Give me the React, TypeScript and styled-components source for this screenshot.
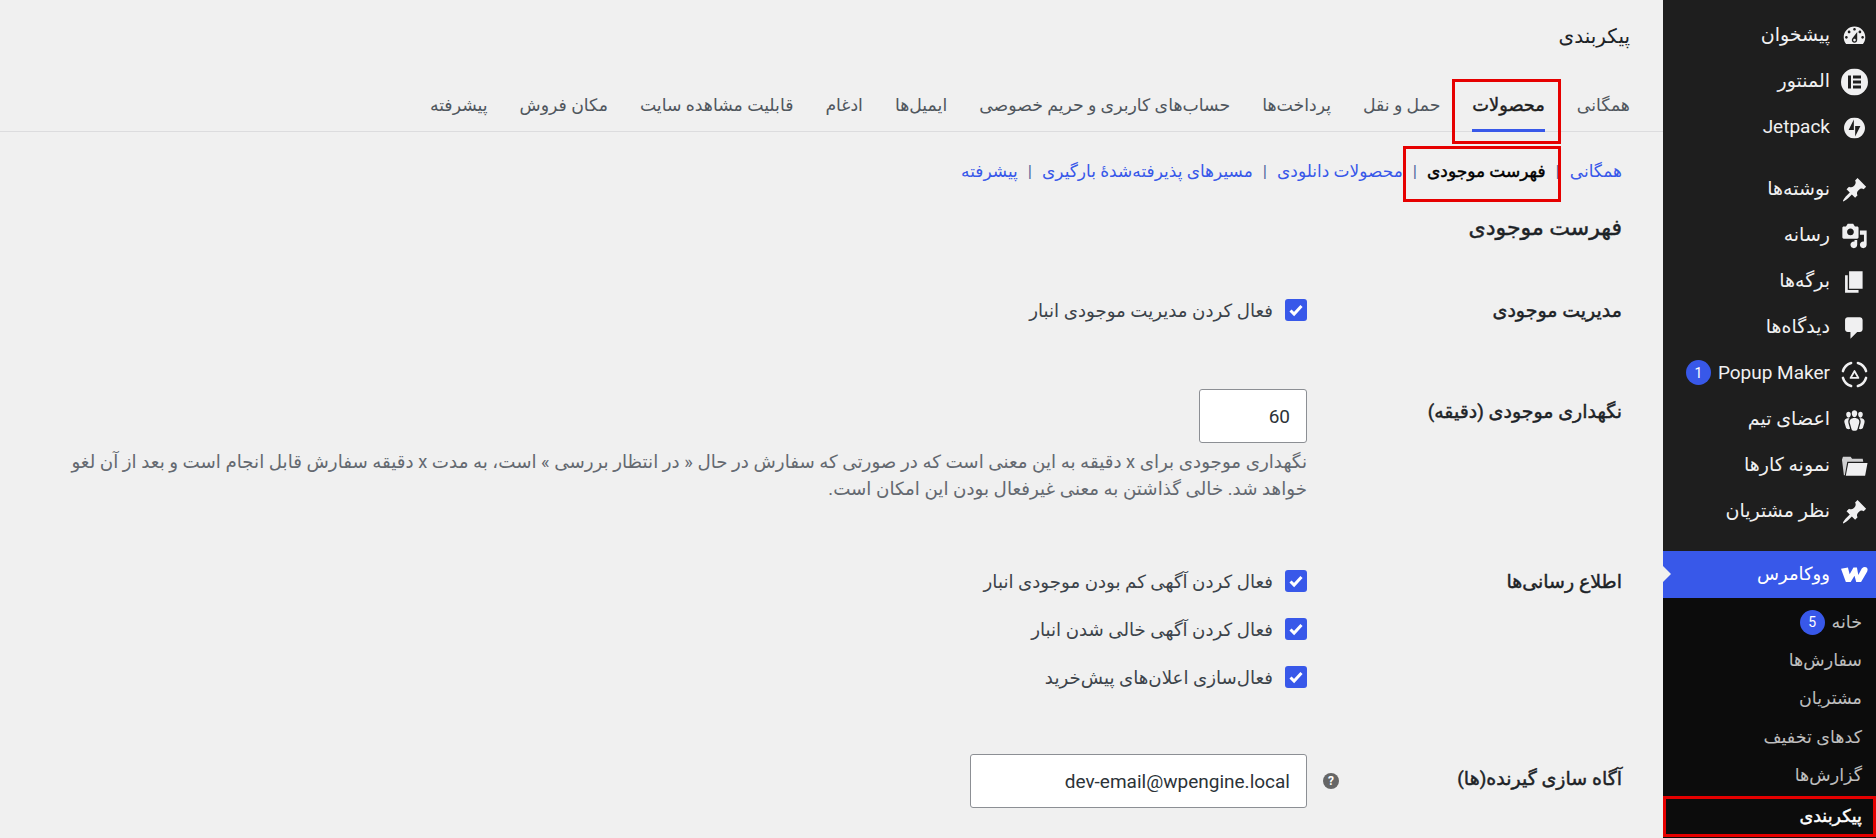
import React from "react";
import styled, { createGlobalStyle, css } from "styled-components";

const FONT = `Roboto, "Noto Sans", "DejaVu Sans", sans-serif`;

// the fallback Arabic face gets far too wide in bold, so fake the medium weight
const medium = css`
  font-weight: 400;
  -webkit-text-stroke: 0.45px currentColor;
`;

const Global = createGlobalStyle`
  html, body {
    margin: 0;
    padding: 0;
    height: 100%;
    overflow: hidden;
    background: #f0f0f0;
  }
  * { box-sizing: border-box; }
`;

const Page = styled.div`
  display: flex;
  direction: rtl;
  width: 1876px;
  height: 838px;
  overflow: hidden;
  font-family: ${FONT};
  background: #f0f0f0;
`;

const Sidebar = styled.aside`
  flex: 0 0 213px;
  height: 838px;
  background: #1e1e1e;
  padding-top: 13px;
  color: #f0f0f1;
`;

const MenuItem = styled.div<{ $gap?: boolean; $active?: boolean }>`
  position: relative;
  display: flex;
  align-items: center;
  height: ${(p) => (p.$active ? 47 : 46)}px;
  margin-top: ${(p) => (p.$gap ? 16 : 0)}px;
  padding-right: 46px;
  padding-bottom: 3px;
  font-size: ${(p) => (p.$active ? 18 : 19)}px;
  background: ${(p) => (p.$active ? "#3858e9" : "transparent")};
  color: ${(p) => (p.$active ? "#fff" : "#f0f0f1")};
`;

const MenuIcon = styled.span`
  position: absolute;
  right: 8px;
  top: 50%;
  transform: translateY(-50%);
  display: flex;
  width: 27px;
  height: 27px;
  align-items: center;
  justify-content: center;
  svg {
    display: block;
    fill: #f0f0f1;
  }
`;

const Badge = styled.span`
  display: inline-flex;
  align-items: center;
  justify-content: center;
  width: 25px;
  height: 25px;
  margin-right: 7px;
  border-radius: 50%;
  background: #3858e9;
  color: #fff;
  font-size: 14px;
  font-family: Roboto, sans-serif;
`;

const ActiveNotch = styled.span`
  position: absolute;
  left: 0;
  top: 15px;
  width: 0;
  height: 0;
  border-top: 8px solid transparent;
  border-bottom: 8px solid transparent;
  border-left: 8px solid #f0f0f0;
`;

const SubMenu = styled.div`
  background: #0c0c0c;
  padding-top: 5px;
  height: 241px;
`;

const SubItem = styled.div`
  display: flex;
  align-items: center;
  height: 38.2px;
  padding-right: 14px;
  font-size: 17.5px;
  color: rgba(240, 240, 241, 0.78);
`;

const CurrentBox = styled.div`
  margin-top: 2px;
  border: 3px solid #e60000;
  height: 41px;
  padding-right: 11px;
  display: flex;
  align-items: center;
  color: #fff;
  ${medium};
  font-size: 17.5px;
`;

const Main = styled.main`
  flex: 1;
  min-width: 0;
`;

const PageTitle = styled.h1`
  margin: 0;
  height: 70px;
  padding: 21px 33px 0 0;
  font-size: 20px;
  line-height: 30px;
  font-weight: 400;
  color: #1d2327;
`;

const TabBar = styled.nav`
  display: flex;
  height: 62px;
  padding-right: 17px;
  border-bottom: 1px solid #dcdcde;
`;

const Tab = styled.a<{ $active?: boolean }>`
  position: relative;
  display: flex;
  align-items: center;
  height: 61px;
  padding: 8px 16px 0;
  font-size: ${(p) => (p.$active ? 17.8 : 17.3)}px;
  white-space: nowrap;
  color: ${(p) => (p.$active ? "#1e1e1e" : "#50575e")};
  ${(p) => p.$active && medium};
  &::after {
    content: "";
    display: ${(p) => (p.$active ? "block" : "none")};
    position: absolute;
    left: 16px;
    right: 16px;
    bottom: -1px;
    height: 3px;
    background: #3858e9;
  }
`;

const RedMark = styled.span`
  position: absolute;
  border: 3px solid #e60000;
  pointer-events: none;
`;

const TabMark = styled(RedMark)`
  left: -4px;
  right: 0;
  top: 9px;
  height: 65px;
`;

const LinkMark = styled(RedMark)`
  left: -24px;
  right: -15px;
  top: -15px;
  height: 56px;
`;

const Content = styled.div`
  padding: 0 41px 0 0;
`;

const SubLinks = styled.div`
  display: flex;
  align-items: center;
  height: 26px;
  margin-top: 26px;
  font-size: 17px;
  white-space: nowrap;
`;

const SubLink = styled.a<{ $current?: boolean }>`
  position: relative;
  color: ${(p) => (p.$current ? "#000" : "#3858e9")};
  ${(p) => p.$current && medium};
`;

const Sep = styled.span`
  margin: 0 10px;
  color: #4f6aa0;
`;

const SectionTitle = styled.h2`
  margin: 29px 0 0;
  font-size: 22px;
  line-height: 30px;
  ${medium};
  color: #1d2327;
`;

const Row = styled.div<{ $top: number }>`
  display: flex;
  margin-top: ${(p) => p.$top}px;
`;

const RowLabel = styled.div<{ $height: number; $lift?: number }>`
  flex: 0 0 315px;
  display: flex;
  align-items: center;
  height: ${(p) => p.$height}px;
  padding-bottom: ${(p) => p.$lift ?? 0}px;
  font-size: 19px;
  ${medium};
  color: #1d2327;
`;

const Field = styled.div`
  flex: 1;
  min-width: 0;
  padding-left: 30px;
  color: #3c434a;
  font-size: 18.2px;
`;

const CheckRow = styled.label`
  display: flex;
  align-items: center;
  gap: 12px;
  height: 22px;
  & + & {
    margin-top: 26px;
  }
`;

const CheckBox = styled.span`
  flex: 0 0 22px;
  display: flex;
  align-items: center;
  justify-content: center;
  width: 22px;
  height: 22px;
  border-radius: 3px;
  background: #3858e9;
  svg {
    display: block;
  }
`;

const InputBox = styled.div<{ $width: number }>`
  display: flex;
  align-items: center;
  width: ${(p) => p.$width}px;
  height: 54px;
  padding: 0 16px;
  background: #fff;
  border: 1px solid #8c8f94;
  border-radius: 3px;
  font-size: 19px;
  color: #2c3338;
  font-family: Roboto, sans-serif;
  direction: ltr;
  justify-content: flex-end;
`;

const InputLine = styled.div`
  display: flex;
  align-items: center;
  gap: 16px;
  margin-right: -32px;
`;

const HelpDot = styled.span`
  display: flex;
  align-items: center;
  justify-content: center;
  width: 16px;
  height: 16px;
  border-radius: 50%;
  background: #666;
  color: #fff;
  font-size: 12px;
  font-weight: 700;
  font-family: Roboto, sans-serif;
`;

const Description = styled.p`
  margin: 5px 0 0;
  max-width: 1245px;
  font-size: 18.27px;
  line-height: 27px;
  color: #646970;
`;

const Pin = () => (
  <svg width="27" height="27" viewBox="0 0 20 20">
    <path d="M10.44 3.02l1.82-1.82 6.36 6.35-1.83 1.82c-1.05-.68-2.48-.57-3.41.36l-.75.75c-.92.93-1.04 2.35-.35 3.41l-1.83 1.82-2.41-2.41-2.8 2.79c-.42.42-3.38 2.71-3.8 2.29s1.86-3.39 2.28-3.81l2.79-2.79L4.1 9.36l1.83-1.82c1.05.69 2.48.57 3.4-.36l.75-.75c.93-.92 1.05-2.35.36-3.41z" />
  </svg>
);

const icons: Record<string, React.ReactNode> = {
  dashboard: (
    <svg width="27" height="27" viewBox="0 0 20 20">
      <path d="M3.76 16h12.48c1.1-1.37 1.76-3.11 1.76-5 0-4.42-3.58-8-8-8s-8 3.58-8 8c0 1.89.66 3.63 1.76 5zM10 4c.55 0 1 .45 1 1s-.45 1-1 1-1-.45-1-1 .45-1 1-1zM6 6c.55 0 1 .45 1 1s-.45 1-1 1-1-.45-1-1 .45-1 1-1zm8 0c.55 0 1 .45 1 1s-.45 1-1 1-1-.45-1-1 .45-1 1-1zm-5.37 5.55L12 7v6c0 1.1-.9 2-2 2s-2-.9-2-2c0-.57.24-1.08.63-1.45zM4 10c.55 0 1 .45 1 1s-.45 1-1 1-1-.45-1-1 .45-1 1-1zm12 0c.55 0 1 .45 1 1s-.45 1-1 1-1-.45-1-1 .45-1 1-1zm-5 3c0-.55-.45-1-1-1s-1 .45-1 1 .45 1 1 1 1-.45 1-1z" fillRule="evenodd" />
    </svg>
  ),
  elementor: (
    <svg width="27" height="27" viewBox="0 0 27 27">
      <path fillRule="evenodd" d="M13.5 0a13.5 13.5 0 100 27 13.5 13.5 0 000-27zM7 7h3v13H7zM12 7h8v3h-8zM12 12h8v3h-8zM12 17h8v3h-8z" />
    </svg>
  ),
  jetpack: (
    <svg width="21" height="21" viewBox="0 0 32 32">
      <path fillRule="evenodd" d="M16 0C7.2 0 0 7.2 0 16s7.2 16 16 16 16-7.2 16-16S24.8 0 16 0zM15 19H7l8-16v16zM17 29V13h8l-8 16z" />
    </svg>
  ),
  pin: <Pin />,
  media: (
    <svg width="27" height="27" viewBox="0 0 20 20">
      <path d="M13 11V4c0-.55-.45-1-1-1h-1.67L9 1H5L3.67 3H2c-.55 0-1 .45-1 1v7c0 .55.45 1 1 1h10c.55 0 1-.45 1-1zM7 4.5c1.38 0 2.5 1.12 2.5 2.5S8.38 9.5 7 9.5 4.5 8.38 4.5 7 5.62 4.5 7 4.5zM14 6h5v10.5c0 1.38-1.12 2.5-2.5 2.5S14 17.88 14 16.5s1.12-2.5 2.5-2.5c.17 0 .34.02.5.05V9h-3V6zm-4 8.05V13h2v3.5c0 1.38-1.12 2.5-2.5 2.5S7 17.88 7 16.5 8.12 14 9.5 14c.17 0 .34.02.5.05z" fillRule="evenodd" />
    </svg>
  ),
  page: (
    <svg width="27" height="27" viewBox="0 0 20 20">
      <path d="M6 15V2h10v13H6zm-1 1h8v2H3V5h2v11z" />
    </svg>
  ),
  comment: (
    <svg width="27" height="27" viewBox="0 0 20 20">
      <path d="M5 2h9c1.1 0 2 .9 2 2v7c0 1.1-.9 2-2 2h-2l-5 5v-5H5c-1.1 0-2-.9-2-2V4c0-1.1.9-2 2-2z" />
    </svg>
  ),
  popup: (
    <svg width="28" height="28" viewBox="0 0 28 28" style={{ fill: "none" }}>
      <g stroke="#f0f0f1" strokeWidth="2.6" strokeLinecap="round" fill="none">
        <path d="M2 10.5A12.5 12.5 0 0 1 10.5 2" />
        <path d="M17.5 2A12.5 12.5 0 0 1 26 10.5" />
        <path d="M26 17.5A12.5 12.5 0 0 1 17.5 26" />
        <path d="M10.5 26A12.5 12.5 0 0 1 2 17.5" />
        <path d="M14 10.5l4 7h-8z" strokeWidth="2" strokeLinejoin="round" />
      </g>
    </svg>
  ),
  team: (
    <svg width="27" height="27" viewBox="0 0 20 20">
      <path d="M8.03 4.46c-.29 1.28.55 3.46 1.97 3.46 1.41 0 2.25-2.18 1.96-3.46-.22-.98-1.08-1.63-1.96-1.63-.89 0-1.74.65-1.97 1.63zm-4.13.9c-.25 1.08.47 2.93 1.67 2.93s1.92-1.85 1.67-2.93c-.19-.83-.92-1.39-1.67-1.39s-1.48.56-1.67 1.39zm8.86 0c-.25 1.08.47 2.93 1.66 2.93 1.2 0 1.92-1.85 1.67-2.93-.19-.83-.92-1.39-1.67-1.39-.74 0-1.47.56-1.66 1.39zm-.59 11.43l1.25-4.3C14.2 10 12.71 8.47 10 8.47c-2.72 0-4.21 1.53-3.44 4.02l1.26 4.3C8.05 17.51 9 18 10 18c.98 0 1.94-.49 2.17-1.21zm-6.1-7.63c-.49.67-.96 1.83-.42 3.59l1.12 3.79c-.34.2-.77.31-1.2.31-.85 0-1.65-.41-1.85-1.03l-1.07-3.65c-.65-2.11.61-3.4 2.92-3.4.27 0 .54.02.79.06-.1.1-.2.22-.29.33zm8.35-.39c2.31 0 3.58 1.29 2.92 3.4l-1.07 3.65c-.2.62-1 1.03-1.85 1.03-.43 0-.86-.11-1.2-.31l1.11-3.77c.55-1.78.08-2.94-.42-3.61-.08-.11-.18-.23-.28-.33.25-.04.51-.06.79-.06z" />
    </svg>
  ),
  folder: (
    <svg width="28" height="21" viewBox="0 0 28 21">
      <path d="M1 4l1-3h8l1.5 2h11l.6 3H6.5L4 20H3z" opacity="0.85" />
      <path d="M7.5 7.5H27.5L25 20.5H5z" />
    </svg>
  ),
  woo: (
    <svg width="27" height="16" viewBox="0 0 78 45" style={{ fill: "#fff" }}>
      <path d="M0 6L20 2L25 22L36 2H46L50 24L60 5Q68-2 75 3Q80 10 72 20L58 44H44L39 26L28 44H14Z" />
    </svg>
  ),
};

const topMenu = [
  { icon: "dashboard", label: "پیشخوان" },
  { icon: "elementor", label: "المنتور" },
  { icon: "jetpack", label: "Jetpack" },
  { icon: "pin", label: "نوشته‌ها", gap: true },
  { icon: "media", label: "رسانه" },
  { icon: "page", label: "برگه‌ها" },
  { icon: "comment", label: "دیدگاه‌ها" },
  { icon: "popup", label: "Popup Maker", badge: "1" },
  { icon: "team", label: "اعضای تیم" },
  { icon: "folder", label: "نمونه کارها" },
  { icon: "pin", label: "نظر مشتریان" },
];

const tabs = [
  "همگانی",
  "محصولات",
  "حمل و نقل",
  "پرداخت‌ها",
  "حساب‌های کاربری و حریم خصوصی",
  "ایمیل‌ها",
  "ادغام",
  "قابلیت مشاهده سایت",
  "مکان فروش",
  "پیشرفته",
];

const Tick = () => (
  <svg width="16" height="16" viewBox="0 0 16 16">
    <path d="M2.5 8.5l3.6 3.6 7.4-8" fill="none" stroke="#fff" strokeWidth="3" />
  </svg>
);

const Check = ({ children }: { children: React.ReactNode }) => (
  <CheckRow>
    <CheckBox>
      <Tick />
    </CheckBox>
    {children}
  </CheckRow>
);

const App: React.FC = () => {
  return (
    <>
      <Global />
      <Page>
        <Sidebar>
          {topMenu.map((m) => (
            <MenuItem key={m.label} $gap={m.gap}>
              <MenuIcon>{icons[m.icon]}</MenuIcon>
              {m.label}
              {m.badge && <Badge>{m.badge}</Badge>}
            </MenuItem>
          ))}
          <MenuItem $gap $active>
            <MenuIcon>{icons.woo}</MenuIcon>
            ووکامرس
            <ActiveNotch />
          </MenuItem>
          <SubMenu>
            <SubItem>
              خانه
              <Badge>5</Badge>
            </SubItem>
            <SubItem>سفارش‌ها</SubItem>
            <SubItem>مشتریان</SubItem>
            <SubItem>کدهای تخفیف</SubItem>
            <SubItem>گزارش‌ها</SubItem>
            <CurrentBox>پیکربندی</CurrentBox>
          </SubMenu>
        </Sidebar>
        <Main>
          <PageTitle>پیکربندی</PageTitle>
          <TabBar>
            {tabs.map((t, i) => (
              <Tab key={t} $active={i === 1}>
                {t}
                {i === 1 && <TabMark />}
              </Tab>
            ))}
          </TabBar>
          <Content>
            <SubLinks>
              <SubLink>همگانی</SubLink>
              <Sep>|</Sep>
              <SubLink $current>
                فهرست موجودی
                <LinkMark />
              </SubLink>
              <Sep>|</Sep>
              <SubLink>محصولات دانلودی</SubLink>
              <Sep>|</Sep>
              <SubLink>مسیرهای پذیرفته‌شدهٔ بارگیری</SubLink>
              <Sep>|</Sep>
              <SubLink>پیشرفته</SubLink>
            </SubLinks>
            <SectionTitle>فهرست موجودی</SectionTitle>
            <Row $top={56}>
              <RowLabel $height={22}>مدیریت موجودی</RowLabel>
              <Field>
                <Check>فعال کردن مدیریت موجودی انبار</Check>
              </Field>
            </Row>
            <Row $top={68}>
              <RowLabel $height={54} $lift={10}>نگهداری موجودی (دقیقه)</RowLabel>
              <Field>
                <InputBox $width={108}>60</InputBox>
                <Description>
                  نگهداری موجودی برای x دقیقه به این معنی است که در صورتی که سفارش در حال « در انتظار بررسی » است، به مدت x دقیقه سفارش قابل انجام است و بعد از آن لغو خواهد شد. خالی گذاشتن به معنی غیرفعال بودن این امکان است.
                </Description>
              </Field>
            </Row>
            <Row $top={68}>
              <RowLabel $height={22}>اطلاع رسانی‌ها</RowLabel>
              <Field>
                <Check>فعال کردن آگهی کم بودن موجودی انبار</Check>
                <Check>فعال کردن آگهی خالی شدن انبار</Check>
                <Check>فعال‌سازی اعلان‌های پیش‌خرید</Check>
              </Field>
            </Row>
            <Row $top={66}>
              <RowLabel $height={54} $lift={5}>آگاه سازی گیرنده(ها)</RowLabel>
              <Field>
                <InputLine>
                  <HelpDot>?</HelpDot>
                  <InputBox $width={337}>dev-email@wpengine.local</InputBox>
                </InputLine>
              </Field>
            </Row>
          </Content>
        </Main>
      </Page>
    </>
  );
};

export default App;
